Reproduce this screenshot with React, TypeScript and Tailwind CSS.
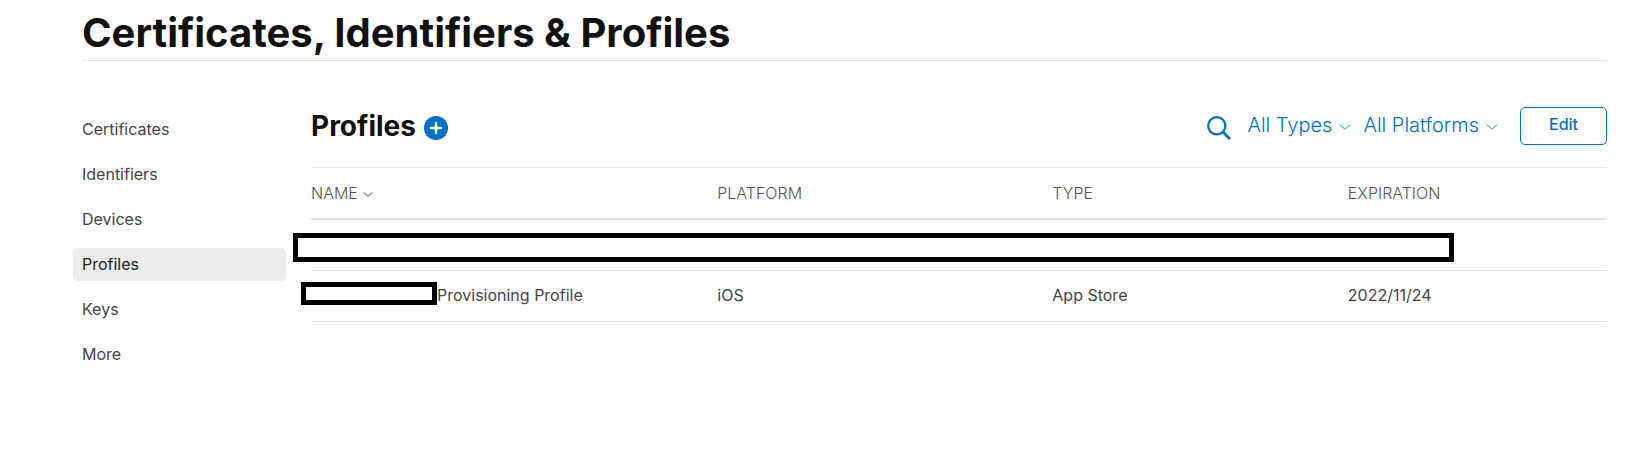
const navItems = ["Certificates", "Identifiers", "Devices", "Profiles", "Keys", "More"];

const filters = [
  { label: "All Types", name: "type" },
  { label: "All Platforms", name: "platform" },
];

function Chevron({ className }: { className?: string }) {
  return (
    <svg viewBox="0 0 12 6" fill="none" stroke="currentColor" strokeWidth="1.6" aria-hidden="true" className={className}>
      <path d="M1 1l5 4 5-4" strokeLinecap="round" strokeLinejoin="round" />
    </svg>
  );
}

function Filter({ label, name }: { label: string; name: string }) {
  return (
    <div className="flex items-center gap-[7px] text-[#0070c9]">
      <select
        name={name}
        aria-label={label}
        defaultValue={label}
        className="mb-0.5 field-sizing-content appearance-none bg-transparent text-xl leading-6 font-light outline-none"
      >
        <option>{label}</option>
      </select>
      <Chevron className="mt-0.5 h-1.5 w-3 opacity-50" />
    </div>
  );
}

function Sidebar() {
  return (
    <nav className="w-[213px] shrink-0 pt-[52px]">
      <ul className="flex flex-col gap-3">
        {navItems.map((item) => (
          <li key={item}>
            <a
              href="#"
              className={
                item === "Profiles"
                  ? "block rounded-[5px] bg-[#ececec] px-[9px] py-1 leading-[25px] text-[#222]"
                  : "block px-[9px] py-1 leading-[25px] text-[#444]"
              }
            >
              {item}
            </a>
          </li>
        ))}
      </ul>
    </nav>
  );
}

function Toolbar() {
  return (
    <div className="flex h-[38px] items-center">
      <h2 className="text-[28px] leading-9 font-bold text-[#111]">Profiles</h2>
      <button type="button" aria-label="Add profile" className="mt-1 ml-2">
        <svg viewBox="0 0 24 24" className="size-6">
          <circle cx="12" cy="12" r="12" fill="#0070c9" />
          <path d="M12 7v10M7 12h10" stroke="#fff" strokeWidth="2.4" strokeLinecap="round" />
        </svg>
      </button>

      <div className="ml-auto flex items-center">
        <button type="button" aria-label="Search" className="mt-1 mr-4 text-[#0070c9]">
          <svg viewBox="0 0 24 24" fill="none" stroke="currentColor" className="size-6">
            <circle cx="9.8" cy="9.8" r="8.6" strokeWidth="2.3" />
            <path d="M16 16l7 7" strokeWidth="3" />
          </svg>
        </button>
        <div className="flex gap-3">
          {filters.map((filter) => (
            <Filter key={filter.name} {...filter} />
          ))}
        </div>
        <button
          type="button"
          className="ml-[22px] h-[38px] w-[87px] rounded-[5px] border border-[#0070c9] pb-1 leading-6 font-medium text-[#0070c9]"
        >
          Edit
        </button>
      </div>
    </div>
  );
}

function ProfilesTable() {
  return (
    <table className="mt-[22px] w-full table-fixed border-separate border-spacing-0 text-left text-[#444]">
      <colgroup>
        <col className="w-[31.35%]" />
        <col className="w-[25.85%]" />
        <col className="w-[22.8%]" />
        <col />
      </colgroup>
      <thead className="text-[#555] uppercase">
        <tr className="h-[53px] *:border-t *:border-b-2 *:border-[#e3e3e3] *:p-0 *:font-light">
          <th>
            <button type="button" className="flex items-center gap-[5px] uppercase">
              Name
              <Chevron className="mt-0.5 h-[5px] w-2.5 opacity-60" />
            </button>
          </th>
          <th>Platform</th>
          <th>Type</th>
          <th>Expiration</th>
        </tr>
      </thead>
      <tbody>
        <tr className="h-[51px] *:border-b *:border-[#e3e3e3] *:p-0">
          <td colSpan={4} className="relative">
            <span className="absolute top-[13px] right-[153px] -left-[18px] h-[29px] border-5 border-black bg-white" />
          </td>
        </tr>
        <tr className="h-[51px] *:border-b *:border-[#e3e3e3] *:p-0 *:pb-0.5">
          <td className="relative">
            <span className="absolute top-[11px] -left-2.5 h-[23px] w-[136px] border-5 border-black bg-white" />
            <span className="pl-[126px]">Provisioning Profile</span>
          </td>
          <td>iOS</td>
          <td>App Store</td>
          <td>2022/11/24</td>
        </tr>
      </tbody>
    </table>
  );
}

export default function App() {
  return (
    <div className="bg-white pr-11 pl-[73px] font-[Inter,sans-serif] text-base">
      <header className="ml-[9px] border-b border-[#e3e3e3] pt-[9px] pb-[3px]">
        <h1 className="text-[40px] leading-[48px] font-bold text-[#111]">
          Certificates, Identifiers &amp; Profiles
        </h1>
      </header>
      <div className="flex gap-[25px]">
        <Sidebar />
        <main className="min-w-0 flex-1 pt-[46px]">
          <Toolbar />
          <ProfilesTable />
        </main>
      </div>
    </div>
  );
}
